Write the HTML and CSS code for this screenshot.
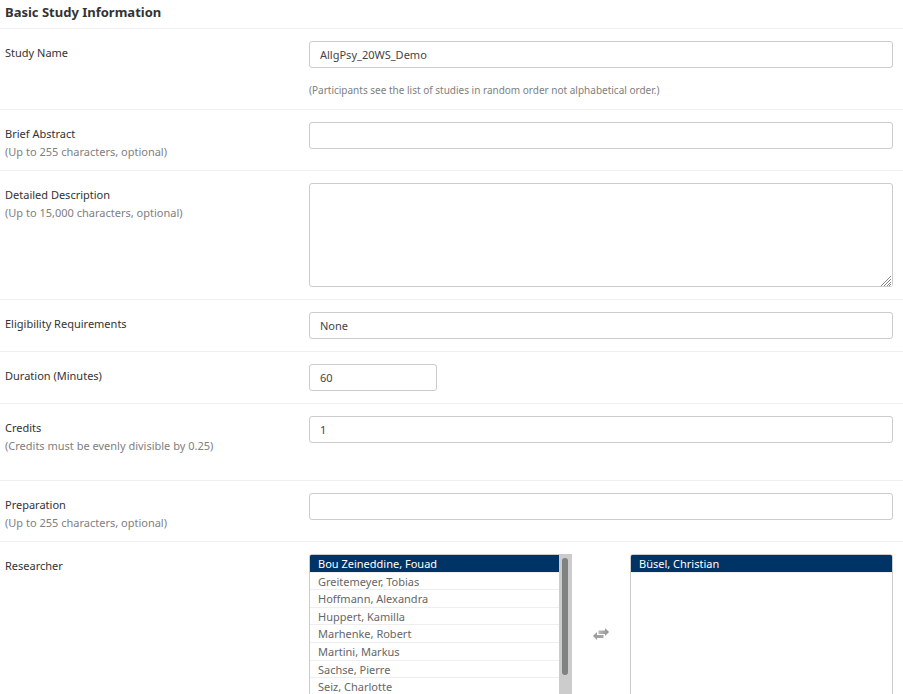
FILE: index.html
```html
<!DOCTYPE html>
<html lang="en">
<head>
<meta charset="utf-8">
<meta name="viewport" content="width=device-width, initial-scale=1">
<title>Study Information</title>
<link rel="stylesheet" href="styles.css">
</head>
<body>
<form class="study-form">
  <h1 class="form-title">Basic Study Information</h1>
  <div class="row">
    <div class="caption"><label for="name">Study Name</label></div>
    <div class="field">
      <input class="control" id="name" type="text" value="AllgPsy_20WS_Demo">
      <p class="help">(Participants see the list of studies in random order not alphabetical order.)</p>
    </div>
  </div>
  <div class="row">
    <div class="caption"><label for="abstract">Brief Abstract</label><p class="hint">(Up to 255 characters, optional)</p></div>
    <div class="field"><input class="control" id="abstract" type="text"></div>
  </div>
  <div class="row">
    <div class="caption"><label for="description">Detailed Description</label><p class="hint">(Up to 15,000 characters, optional)</p></div>
    <div class="field area">
      <textarea class="control control-area" id="description"></textarea>
      <svg class="grip" viewBox="0 0 11 11" width="11" height="11" aria-hidden="true">
        <path fill="none" stroke="#888" d="M0 11L10 1M3 11L10 4M6 11L10 7M8 11L10 9"/>
      </svg>
    </div>
  </div>
  <div class="row">
    <div class="caption"><label for="eligibility">Eligibility Requirements</label></div>
    <div class="field"><input class="control" id="eligibility" type="text" value="None"></div>
  </div>
  <div class="row">
    <div class="caption"><label for="duration">Duration (Minutes)</label></div>
    <div class="field"><input class="control control-short" id="duration" type="text" value="60"></div>
  </div>
  <div class="row row-roomy">
    <div class="caption"><label for="credits">Credits</label><p class="hint">(Credits must be evenly divisible by 0.25)</p></div>
    <div class="field"><input class="control" id="credits" type="text" value="1"></div>
  </div>
  <div class="row">
    <div class="caption"><label for="preparation">Preparation</label><p class="hint">(Up to 255 characters, optional)</p></div>
    <div class="field"><input class="control" id="preparation" type="text"></div>
  </div>
  <div class="row">
    <div class="caption"><label for="researchers">Researcher</label></div>
    <div class="field transfer">
      <div class="scroller">
        <select class="list" id="researchers" multiple>
          <option selected>Bou Zeineddine, Fouad</option>
          <option>Greitemeyer, Tobias</option>
          <option>Hoffmann, Alexandra</option>
          <option>Huppert, Kamilla</option>
          <option>Marhenke, Robert</option>
          <option>Martini, Markus</option>
          <option>Sachse, Pierre</option>
          <option>Seiz, Charlotte</option>
        </select>
        <div class="track"><div class="thumb"></div></div>
      </div>
      <button class="swap" type="button" aria-label="Move between lists">
        <svg viewBox="0 0 16 12" width="16" height="12" aria-hidden="true">
          <defs>
            <linearGradient id="shade" x1="0" y1="0" x2="1" y2="0">
              <stop offset="0" stop-color="#bcbcbc"/><stop offset="1" stop-color="#8e8e8e"/>
            </linearGradient>
            <linearGradient id="shade-back" x1="0" y1="0" x2="1" y2="0">
              <stop offset="0" stop-color="#9a9a9a"/><stop offset="1" stop-color="#a8a8a8"/>
            </linearGradient>
          </defs>
          <path fill="url(#shade)" d="M5.500 2.500H12V0l4 4-4 4V6H5.500z"/>
          <path fill="url(#shade-back)" d="M10.500 7v3H4v2L0 8l4-4v3z"/>
        </svg>
      </button>
      <select class="list" aria-label="Selected researchers" multiple>
        <option selected>Büsel, Christian</option>
      </select>
    </div>
  </div>
</form>
</body>
</html>
```
FILE: styles.css
```css
* {
  box-sizing: border-box;
}

body {
  margin: 0;
  background: #fff;
  color: #333;
  font-family: "Noto Sans", "Open Sans", sans-serif;
  font-size: 11px;
  line-height: 18px;
}

.form-title {
  margin: 0;
  padding: 2px 5px 6px;
  border-bottom: 1px solid #eff0f4;
  font-size: 13px;
  line-height: 20px;
}

.row {
  display: grid;
  grid-template-columns: 304px minmax(0, 1fr);
  padding: 12px 10px 12px 5px;
  border-bottom: 1px solid #eff0f4;
}

.caption {
  padding-top: 3px;
  margin-bottom: -3px;
}

.caption label {
  display: block;
}

.hint,
.help {
  margin: 0;
  color: #808080;
}

.help {
  padding-top: 13px;
  margin-bottom: -2px;
  font-size: 10px;
}

.row-roomy {
  padding-bottom: 28px;
}

.control {
  display: block;
  width: 100%;
  height: 27px;
  padding: 0 10px;
  border: 1px solid #ccc;
  border-radius: 3px;
  background: #fff;
  color: #444;
  font: inherit;
}

.area {
  position: relative;
}

.control-area {
  height: 104px;
  padding: 5px 10px;
  resize: vertical;
}

.grip {
  position: absolute;
  right: 1px;
  bottom: 1px;
  background: #fff;
  pointer-events: none;
}

.control-short {
  width: 128px;
}

.transfer {
  display: grid;
  grid-template-columns: 1fr 58px 1fr;
}

.scroller {
  display: grid;
  grid-template-columns: minmax(0, 1fr) 13px;
}

.list {
  width: 100%;
  height: 160px;
  padding: 0;
  border: 1px solid #ccc;
  border-radius: 3px;
  background: #fff;
  color: #666;
  font: inherit;
  overflow-y: auto;
}

.scroller .list {
  border-right: 0;
  border-radius: 3px 0 0 3px;
}

.list option {
  height: 1.6em;
  min-height: 0;
  padding: 1px 8px 0;
  border-bottom: 1px solid #eee;
}

.list option:checked {
  background: #036 linear-gradient(#036, #036);
  color: #fff;
}

.track {
  padding: 4px 4px 4px 3px;
  background: #ccc;
}

.thumb {
  height: 77%;
  border-radius: 3px;
  background: #7f8281;
}

.swap {
  display: flex;
  align-items: center;
  justify-content: center;
  padding: 0;
  border: 0;
  background: none;
}
```
